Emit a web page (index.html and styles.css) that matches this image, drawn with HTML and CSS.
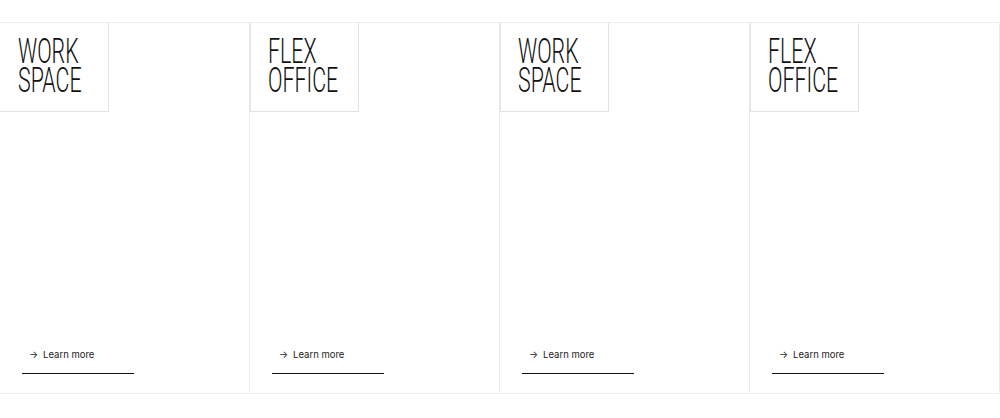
FILE: index.html
```html
<!DOCTYPE html>
<html>
<head>
<meta charset="utf-8">
<link rel="stylesheet" href="styles.css">
</head>
<body>
<div class="strip">
  <div class="card">
    <div class="label"><span class="title">WORK<br>SPACE</span></div>
    <div class="cta"><a class="more"><span class="arrow">→</span>Learn more</a><div class="rule"></div></div>
  </div>
  <div class="card">
    <div class="label"><span class="title">FLEX<br>OFFICE</span></div>
    <div class="cta"><a class="more"><span class="arrow">→</span>Learn more</a><div class="rule"></div></div>
  </div>
  <div class="card">
    <div class="label"><span class="title">WORK<br>SPACE</span></div>
    <div class="cta"><a class="more"><span class="arrow">→</span>Learn more</a><div class="rule"></div></div>
  </div>
  <div class="card">
    <div class="label"><span class="title">FLEX<br>OFFICE</span></div>
    <div class="cta"><a class="more"><span class="arrow">→</span>Learn more</a><div class="rule"></div></div>
  </div>
</div>
</body>
</html>
```
FILE: styles.css
```css
html, body {
  margin: 0;
  padding: 0;
  background: #fff;
}
body {
  font-family: Inter, "Liberation Sans", sans-serif;
}
.strip {
  margin-top: 22px;
  display: grid;
  grid-template-columns: repeat(4, 250px);
  height: 370px;
  border-top: 1px solid #efeff2;
  border-bottom: 1px solid #efeff2;
}
.card {
  display: flex;
  flex-direction: column;
  justify-content: space-between;
  border-right: 1px solid #ececee;
}
.label {
  width: 109px;
  height: 89px;
  box-sizing: border-box;
  border-right: 1px solid #e2e2e6;
  border-bottom: 1px solid #e2e2e6;
  padding: 14px 0 0 18px;
  overflow: hidden;
}
.card + .card .label {
  border-left: 1px solid #e2e2e6;
  padding-left: 17px;
}
.title {
  display: block;
  font-family: Roboto, sans-serif;
  font-weight: 300;
  font-size: 35px;
  line-height: 29px;
  color: #111;
  transform: scaleX(0.61);
  transform-origin: left top;
  white-space: nowrap;
}
.cta {
  padding: 0 0 19px 22px;
}
.more {
  display: flex;
  align-items: center;
  padding-left: 7px;
  font-size: 9.5px;
  color: #222;
  height: 14px;
}
.arrow {
  font-size: 9.5px;
  margin-right: 5px;
}
.rule {
  margin-top: 12px;
  width: 112px;
  height: 1px;
  background: #111;
}
```
